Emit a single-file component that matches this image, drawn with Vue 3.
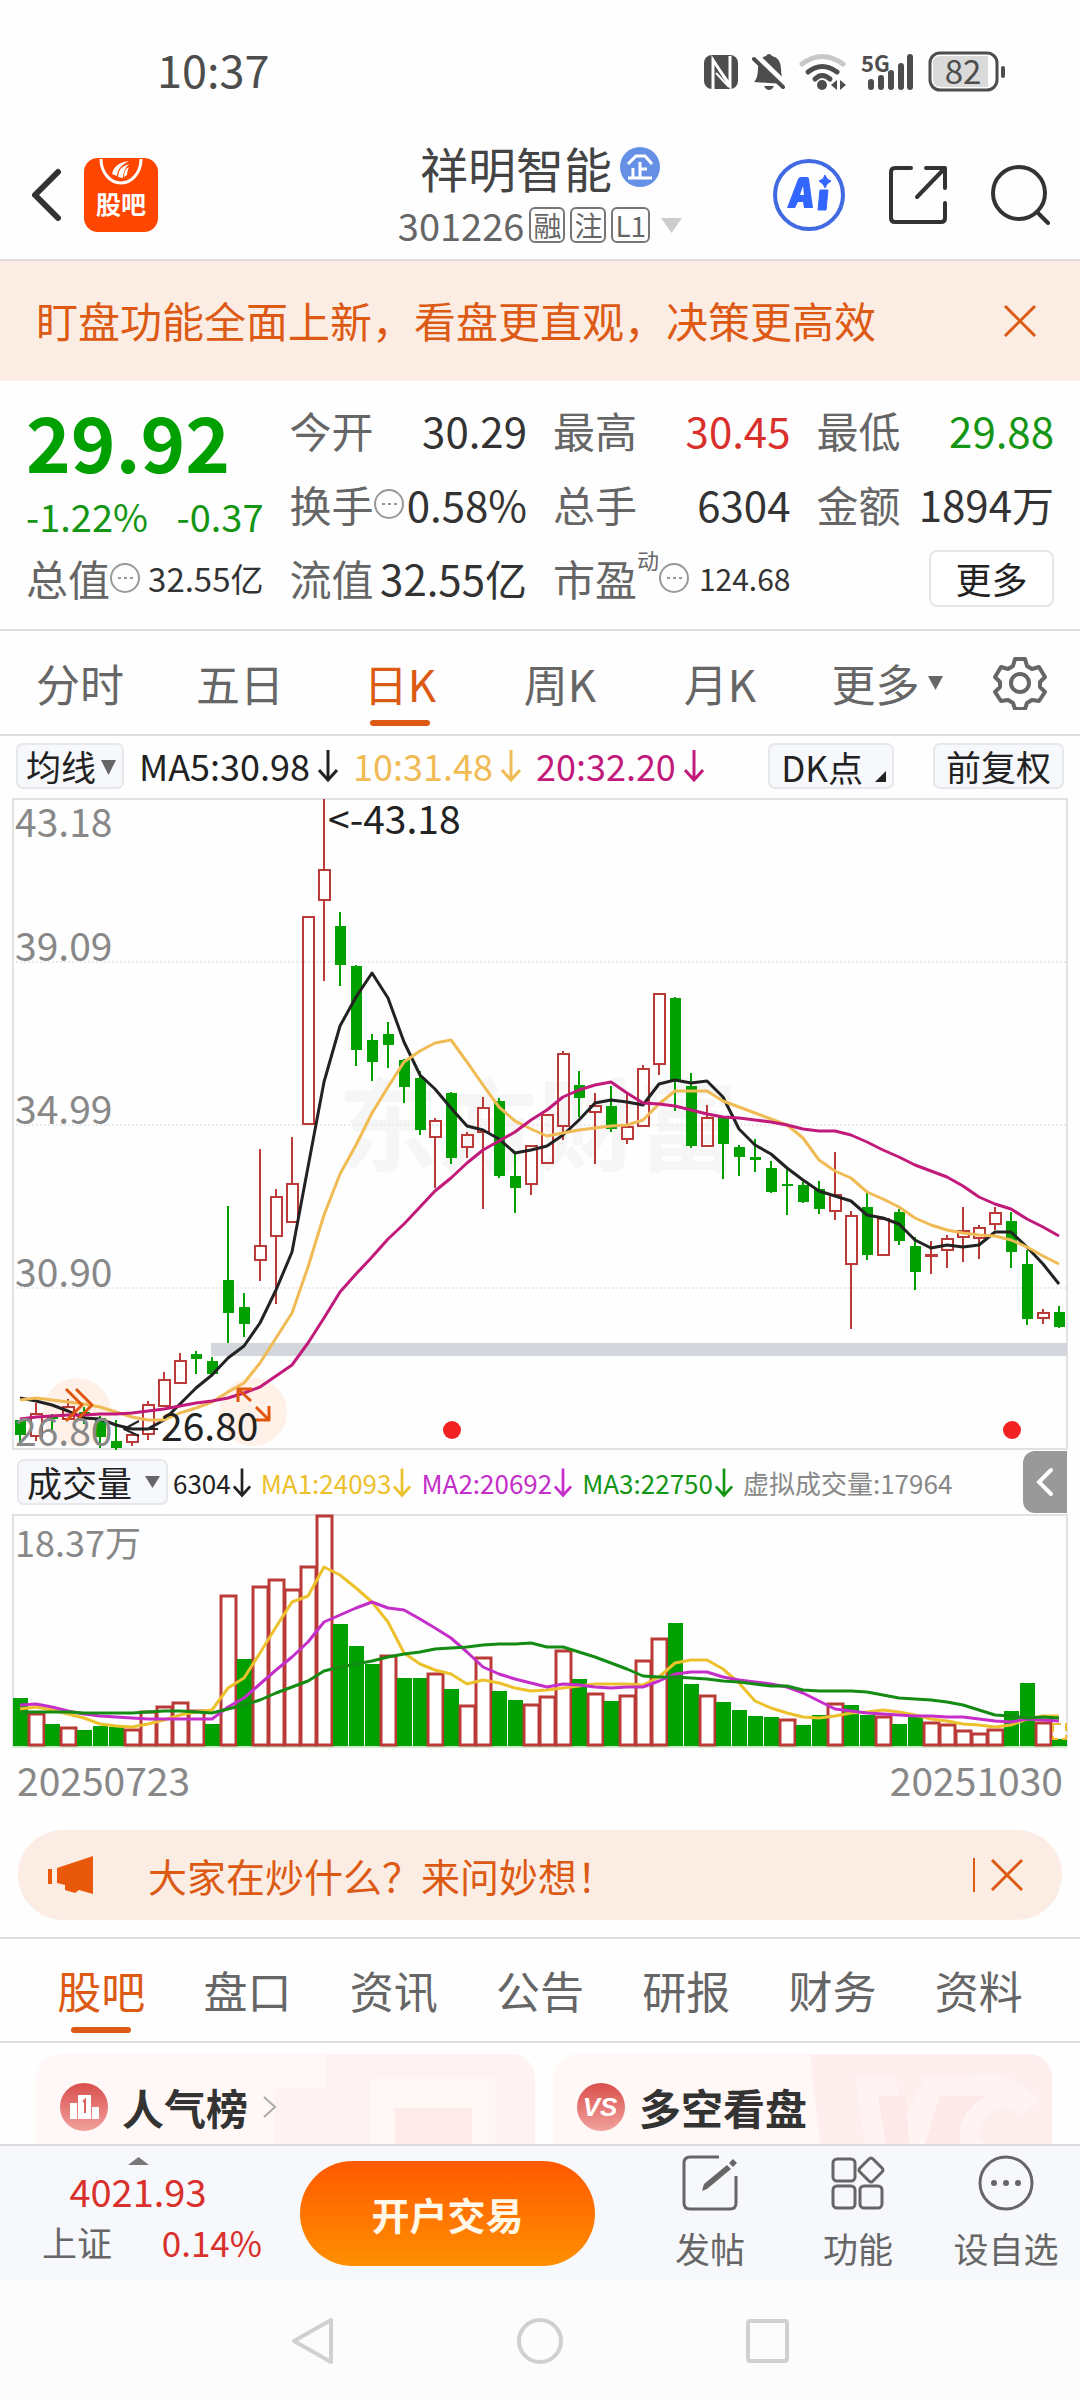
<script setup>
import { ref } from 'vue'

const periods = ['分时', '五日', '日K', '周K', '月K']
const activePeriod = ref('日K')
const sections = ['股吧', '盘口', '资讯', '公告', '研报', '财务', '资料']
const activeSection = ref('股吧')

const cx = (i) => Math.round(20 + i * 15.98)

// [up?, high, body top, body bottom, low]
const candles = [
  [0, 1420, 1420, 1435, 1445], [1, 1403, 1413, 1437, 1441], [0, 1414, 1415, 1419, 1430],
  [1, 1399, 1406, 1420, 1420], [0, 1407, 1412, 1415, 1424], [0, 1416, 1418, 1437, 1448],
  [0, 1420, 1441, 1448, 1450], [1, 1433, 1434, 1443, 1446], [1, 1401, 1404, 1435, 1440],
  [1, 1372, 1379, 1407, 1407], [1, 1353, 1360, 1384, 1384], [0, 1351, 1354, 1359, 1374],
  [0, 1357, 1361, 1374, 1374], [0, 1206, 1280, 1313, 1343], [0, 1293, 1307, 1324, 1337],
  [1, 1149, 1245, 1261, 1281], [1, 1189, 1196, 1237, 1304], [1, 1137, 1183, 1223, 1223],
  [1, 916, 916, 1125, 1125], [1, 799, 869, 901, 981], [0, 912, 926, 965, 986],
  [0, 965, 966, 1050, 1066], [0, 1034, 1040, 1062, 1081], [0, 1022, 1034, 1045, 1068],
  [0, 1059, 1060, 1087, 1103], [0, 1071, 1078, 1130, 1135], [1, 1118, 1120, 1138, 1188],
  [0, 1092, 1093, 1158, 1164], [1, 1132, 1134, 1148, 1158], [1, 1097, 1107, 1133, 1209],
  [0, 1098, 1101, 1176, 1178], [0, 1152, 1176, 1188, 1213], [1, 1145, 1145, 1185, 1195],
  [1, 1114, 1114, 1164, 1164], [1, 1051, 1053, 1127, 1140], [0, 1071, 1085, 1098, 1117],
  [1, 1093, 1105, 1113, 1164], [0, 1086, 1106, 1129, 1132], [1, 1094, 1126, 1140, 1144],
  [1, 1065, 1068, 1127, 1127], [1, 993, 993, 1065, 1075], [0, 997, 998, 1080, 1111],
  [0, 1073, 1086, 1146, 1148], [1, 1105, 1117, 1147, 1147], [0, 1117, 1117, 1144, 1179],
  [0, 1145, 1147, 1157, 1176], [0, 1139, 1157, 1160, 1172], [0, 1161, 1168, 1192, 1193],
  [0, 1168, 1184, 1186, 1215], [0, 1182, 1185, 1202, 1203], [0, 1181, 1189, 1209, 1214],
  [1, 1152, 1194, 1212, 1220], [1, 1211, 1215, 1265, 1329], [0, 1193, 1207, 1255, 1260],
  [1, 1218, 1218, 1256, 1256], [0, 1209, 1212, 1241, 1245], [0, 1237, 1246, 1272, 1290],
  [1, 1241, 1254, 1257, 1274], [1, 1235, 1238, 1251, 1268], [1, 1207, 1230, 1238, 1262],
  [1, 1225, 1227, 1239, 1259], [1, 1207, 1212, 1225, 1230], [0, 1212, 1221, 1252, 1268],
  [0, 1250, 1264, 1319, 1325], [1, 1309, 1312, 1319, 1324], [0, 1306, 1312, 1327, 1328]
]

const volumeTops = [
  1698, 1713, 1724, 1727, 1730, 1726, 1727, 1729, 1711, 1706, 1702, 1710, 1724, 1595, 1659, 1586,
  1579, 1589, 1566, 1515, 1624, 1646, 1664, 1655, 1678, 1678, 1673, 1689, 1705, 1657, 1691, 1700,
  1704, 1696, 1650, 1679, 1693, 1701, 1695, 1660, 1638, 1623, 1684, 1695, 1702, 1710, 1716, 1717,
  1719, 1725, 1715, 1703, 1705, 1715, 1716, 1724, 1717, 1722, 1724, 1730, 1733, 1729, 1711, 1683,
  1722, 1739
]
// days that closed above the previous close although the candle itself is green
const closedUp = [11, 13, 23, 48]
const closedDown = [52]
const volumeUp = (i) => (candles[i][0] && !closedDown.includes(i)) || closedUp.includes(i)

const ma5 = [1398, 1401, 1405, 1411, 1418, 1419, 1425, 1429, 1429, 1420, 1404, 1388, 1375, 1358, 1346, 1323, 1290, 1252, 1167, 1082, 1026, 997, 973, 998, 1042, 1075, 1089, 1108, 1126, 1130, 1139, 1153, 1150, 1146, 1135, 1120, 1103, 1100, 1102, 1105, 1084, 1080, 1083, 1081, 1097, 1129, 1145, 1154, 1168, 1180, 1191, 1196, 1201, 1215, 1218, 1224, 1240, 1248, 1245, 1247, 1245, 1232, 1232, 1247, 1264, 1284]
const ma10 = [1400, 1398, 1400, 1402, 1404, 1407, 1412, 1417, 1420, 1420, 1413, 1408, 1402, 1392, 1383, 1363, 1338, 1313, 1267, 1215, 1174, 1145, 1113, 1087, 1062, 1051, 1043, 1040, 1062, 1085, 1107, 1121, 1129, 1136, 1133, 1130, 1128, 1126, 1125, 1120, 1104, 1091, 1091, 1091, 1101, 1107, 1113, 1119, 1125, 1138, 1160, 1171, 1178, 1192, 1199, 1207, 1218, 1225, 1230, 1233, 1235, 1236, 1240, 1247, 1256, 1264]
const ma20 = [1419, 1417, 1416, 1415, 1415, 1414, 1414, 1413, 1411, 1409, 1406, 1403, 1401, 1398, 1393, 1387, 1376, 1365, 1343, 1318, 1292, 1274, 1257, 1239, 1224, 1207, 1191, 1178, 1163, 1150, 1141, 1132, 1120, 1110, 1097, 1090, 1085, 1082, 1093, 1103, 1104, 1106, 1110, 1114, 1117, 1118, 1120, 1122, 1125, 1129, 1131, 1131, 1135, 1142, 1150, 1157, 1165, 1171, 1177, 1186, 1197, 1204, 1209, 1219, 1227, 1236]
const vol1 = [1709, 1707, 1710, 1714, 1718, 1724, 1726, 1727, 1724, 1720, 1715, 1712, 1710, 1688, 1678, 1653, 1627, 1602, 1596, 1567, 1575, 1588, 1602, 1622, 1653, 1664, 1670, 1674, 1684, 1680, 1683, 1688, 1691, 1690, 1688, 1686, 1684, 1684, 1684, 1685, 1677, 1663, 1660, 1660, 1669, 1683, 1701, 1708, 1713, 1717, 1718, 1716, 1713, 1712, 1710, 1712, 1715, 1719, 1721, 1724, 1725, 1727, 1725, 1719, 1716, 1716]
const vol2 = [1705, 1704, 1707, 1711, 1714, 1716, 1717, 1718, 1719, 1719, 1719, 1719, 1719, 1707, 1698, 1684, 1670, 1657, 1642, 1622, 1615, 1608, 1602, 1608, 1610, 1619, 1628, 1638, 1652, 1667, 1674, 1679, 1683, 1687, 1684, 1685, 1687, 1688, 1687, 1687, 1681, 1674, 1672, 1672, 1677, 1680, 1682, 1684, 1687, 1693, 1701, 1709, 1711, 1713, 1714, 1715, 1716, 1716, 1717, 1717, 1719, 1721, 1722, 1719, 1720, 1721]
const vol3 = [1712, 1712, 1712, 1712, 1713, 1713, 1713, 1713, 1712, 1711, 1711, 1712, 1713, 1709, 1705, 1700, 1693, 1687, 1681, 1671, 1667, 1664, 1661, 1657, 1654, 1652, 1649, 1648, 1647, 1645, 1644, 1644, 1643, 1647, 1647, 1652, 1657, 1663, 1669, 1676, 1677, 1677, 1678, 1679, 1681, 1682, 1684, 1686, 1686, 1690, 1691, 1691, 1691, 1692, 1695, 1698, 1699, 1700, 1702, 1705, 1710, 1715, 1716, 1718, 1717, 1718]

const line = (values) => values.map((y, i) => `${cx(i)},${y}`).join(' ')
const gridLabels = [
  { y: 837, text: '43.18' },
  { y: 961, text: '39.09' },
  { y: 1124, text: '34.99' },
  { y: 1287, text: '30.90' },
  { y: 1446, text: '26.80' }
]
</script>

<template>
  <div class="page">
    <div class="status">
      <time>10:37</time>
      <svg class="status-icons" viewBox="704 42 303 62" role="img" aria-label="系统状态">
        <rect x="704" y="56" width="34" height="34" rx="8" fill="#4d4d4d" />
        <path d="M713 90V61l17 26V57" fill="none" stroke="#fff" stroke-width="3" />
        <path d="M716 66l14 19M716 74l13 14" stroke="#fff" stroke-width="2" />
        <path d="M754 83q4-4 4-14q0-10 8-12q1-2 3-2t3 2q9 2 9 13q0 9 4 15z" fill="#4d4d4d" />
        <path d="M755 57L787 88" stroke="#fff" stroke-width="8" />
        <path d="M754 60L783 88" stroke="#4d4d4d" stroke-width="4" stroke-linecap="round" />
        <path d="M764 87h10q-2 4-5 4t-5-4z" fill="#4d4d4d" />
        <g fill="none" stroke="#4d4d4d" stroke-width="5" stroke-linecap="round">
          <path d="M802 65q20-15 41 0" stroke="#c8c8c8" />
          <path d="M808 73q14-11 29 0" />
          <path d="M815 80q7-7 15 0" />
        </g>
        <circle cx="822" cy="86" r="5" fill="#4d4d4d" />
        <path d="M831 86l6-5v10zM838 81v10M846 86l-6-5v10z" fill="#4d4d4d" />
        <text x="861" y="73" class="net">5G</text>
        <g stroke="#4d4d4d" stroke-width="6" stroke-linecap="round">
          <path d="M871 83v5M881 79v9M891 74v14M901 67v21M910 58v30" />
        </g>
        <rect x="930" y="54" width="67" height="37" rx="10" fill="#fff" stroke="#4d4d4d" stroke-width="3" />
        <path d="M940 57h48v31h-48q-7 0-7-7v-17q0-7 7-7z" fill="#dadada" />
        <text x="963" y="85" text-anchor="middle" class="battery">82</text>
        <path d="M1003 69v8" stroke="#4d4d4d" stroke-width="4" stroke-linecap="round" />
      </svg>
    </div>

    <header class="header">
      <div class="header-left">
        <button class="plain" aria-label="返回">
          <svg width="34" height="56" viewBox="0 0 34 56"><path d="M29 5L6 28l23 23" fill="none" stroke="#333" stroke-width="6" stroke-linecap="round" stroke-linejoin="round" /></svg>
        </button>
        <a class="logo" href="#" aria-label="股吧">
          <svg width="74" height="74" viewBox="0 0 74 74">
            <rect width="74" height="74" rx="14" fill="#ff4600" />
            <path d="M17 1a20 24 0 0 0 40 0" fill="none" stroke="#fff" stroke-width="3" />
            <path d="M28 16q2-11 17-13q-12 6-12 15zM34 19q0-10 11-13q-6 6-6 14zM40 19q0-8 5-10q-2 4-2 8z" fill="#fff" />
            <text x="37" y="56" text-anchor="middle">股吧</text>
          </svg>
        </a>
      </div>
      <div class="title">
        <h1>祥明智能<svg width="40" height="40" viewBox="0 0 40 40"><circle cx="20" cy="20" r="20" fill="#6690e6" /><path d="M8 17L16 9h9l7 8M20 15v16M20 22h7M13 21v10M8 31h24" fill="none" stroke="#fff" stroke-width="3" /></svg></h1>
        <div class="sub">
          <span>301226</span><i>融</i><i>注</i><i>L1</i>
          <svg width="21" height="15" viewBox="0 0 21 15"><path d="M0 0h21L10.500 15z" fill="#ccc" /></svg>
        </div>
      </div>
      <div class="header-right">
        <button class="plain" aria-label="AI">
          <svg width="72" height="72" viewBox="0 0 72 72">
            <circle cx="36" cy="36" r="34" fill="none" stroke="#4169e1" stroke-width="4" />
            <path d="M14 49L25 20q1-2 3-2h6q2 0 2 2l4 29h-9l-1-6h-5l-3 6zM27 36h4l-1-9z" fill="#3366ff" />
            <path d="M47 31h8l-2 20h-8zM52 16l2 4 4 2-4 3-2 4-2-4-4-3 4-2z" fill="#3366ff" stroke="#3366ff" stroke-width="1" />
          </svg>
        </button>
        <button class="plain" aria-label="分享">
          <svg width="58" height="58" viewBox="0 0 58 58"><path d="M22 2H6q-4 0-4 4v46q0 4 4 4h46q4 0 4-4V37M37 2h19v20M55 3L28 31" fill="none" stroke="#333" stroke-width="4" stroke-linecap="round" stroke-linejoin="round" /></svg>
        </button>
        <button class="plain" aria-label="搜索">
          <svg width="60" height="60" viewBox="0 0 60 60"><circle cx="28" cy="28" r="26" fill="none" stroke="#333" stroke-width="4" /><path d="M46 47l11 11" stroke="#333" stroke-width="4" stroke-linecap="round" /></svg>
        </button>
      </div>
    </header>

    <div class="notice">
      <span>盯盘功能全面上新，看盘更直观，决策更高效</span>
      <button class="plain" aria-label="关闭">
        <svg width="34" height="34" viewBox="0 0 34 34"><path d="M2 2l30 30M32 2L2 32" stroke="#dc5a14" stroke-width="3" /></svg>
      </button>
    </div>

    <section class="quote">
      <div class="price">
        <strong>29.92</strong>
        <div class="change"><span>-1.22%</span><span>-0.37</span></div>
      </div>
      <div class="cell"><span>今开</span><b>30.29</b></div>
      <div class="cell"><span>最高</span><b class="red">30.45</b></div>
      <div class="cell"><span>最低</span><b class="green">29.88</b></div>
      <div class="cell"><span>换手</span><svg class="dots" viewBox="0 0 30 30"><circle cx="15" cy="15" r="14" /><path d="M8 15h3M14 15h3M20 15h3" /></svg><b>0.58%</b></div>
      <div class="cell"><span>总手</span><b>6304</b></div>
      <div class="cell"><span>金额</span><b>1894万</b></div>
      <div class="cell"><span>总值</span><svg class="dots" viewBox="0 0 30 30"><circle cx="15" cy="15" r="14" /><path d="M8 15h3M14 15h3M20 15h3" /></svg><b class="small">32.55亿</b></div>
      <div class="cell"><span>流值</span><b>32.55亿</b></div>
      <div class="cell"><span>市盈</span><small>动</small><svg class="dots" viewBox="0 0 30 30"><circle cx="15" cy="15" r="14" /><path d="M8 15h3M14 15h3M20 15h3" /></svg><b class="tiny">124.68</b></div>
      <div class="cell end"><button class="more">更多</button></div>
    </section>

    <nav class="periods">
      <button v-for="p in periods" :key="p" class="tab" :class="{ active: p === activePeriod }" @click="activePeriod = p">{{ p }}</button>
      <button class="tab tab-more">更多<svg width="15" height="14" viewBox="0 0 15 14"><path d="M0 0h15L7.500 14z" fill="#666" /></svg></button>
      <button class="plain gear" aria-label="设置">
        <svg width="54" height="54" viewBox="0 0 54 54" fill="none" stroke="#666" stroke-width="4" stroke-linejoin="round">
          <path d="M22 3h10l2 7 5 3 7-2 6 10-5 5v5l5 5-6 9-7-1-5 3-2 6H22l-2-6-5-3-7 1-6-9 5-5v-5l-5-5 6-10 7 2 5-3z" />
          <circle cx="27" cy="27" r="9" />
        </svg>
      </button>
    </nav>

    <div class="ma-row">
      <label class="picker"><select aria-label="主图指标"><option>均线</option></select><svg width="15" height="15" viewBox="0 0 15 15"><path d="M0 0h15L7.500 15z" fill="#666" /></svg></label>
      <span class="c-dark">MA5:30.98<svg class="arrow" viewBox="0 0 20 34"><path d="M10 2v29M1 22l9 10 9-10" /></svg></span>
      <span class="c-gold">10:31.48<svg class="arrow" viewBox="0 0 20 34"><path d="M10 2v29M1 22l9 10 9-10" /></svg></span>
      <span class="c-mag">20:32.20<svg class="arrow" viewBox="0 0 20 34"><path d="M10 2v29M1 22l9 10 9-10" /></svg></span>
      <button class="chip dk">DK点<svg width="11" height="11" viewBox="0 0 11 11"><path d="M11 0v11H0z" fill="#222" /></svg></button>
      <button class="chip">前复权</button>
    </div>

    <svg class="chart" viewBox="0 798 1080 652" role="img" aria-label="日K线图">
      <text x="338" y="1163" class="watermark">东方财富</text>
      <g fill="none" stroke="#e2e2e2" stroke-width="2">
        <rect x="13" y="799" width="1054" height="650" />
        <path d="M12 962H1067M12 1125H1067M12 1288H1067" stroke-dasharray="2 2" stroke-width="2" stroke="#ebebeb" />
      </g>
      <rect x="211" y="1343" width="856" height="13" fill="#d3d6db" />
      <circle cx="77" cy="1412" r="34" fill="#fff0e8" />
      <circle cx="253" cy="1412" r="34" fill="#fff0e8" />
      <g v-for="(c, i) in candles" :key="i">
        <template v-if="c[0]">
          <path :d="`M${cx(i)} ${c[1]}V${c[2]}M${cx(i)} ${c[3]}V${c[4]}`" stroke="#b93a36" stroke-width="2" />
          <rect :x="cx(i) - 5" :y="c[2] + 1" width="11" :height="Math.max(1, c[3] - c[2] - 2)" fill="none" stroke="#b93a36" stroke-width="2" />
        </template>
        <template v-else>
          <path :d="`M${cx(i)} ${c[1]}V${c[4]}`" stroke="#00a000" stroke-width="2" />
          <rect :x="cx(i) - 5" :y="c[2]" width="11" :height="c[3] - c[2]" fill="#00a000" />
        </template>
      </g>
      <g fill="none" stroke-width="3" stroke-linejoin="round">
        <polyline :points="line(ma5)" stroke="#222" />
        <polyline :points="line(ma10)" stroke="#f0bb55" />
        <polyline :points="line(ma20)" stroke="#c11a7b" />
        <path d="M66 1389l16 16-16 16M76 1389l16 16-16 16" stroke="#e0560c" />
        <path d="M251 1401l-13-12v13m0-13h14M256 1407l13 13v-14m0 14h-15" stroke="#e0560c" />
        <path d="M139 1421l-15 8 15 7M124 1429h34" stroke="#222" stroke-width="2" />
      </g>
      <text v-for="g in gridLabels" :key="g.text" x="15" :y="g.y" class="axis">{{ g.text }}</text>
      <text x="328" y="834" class="mark">&lt;-43.18</text>
      <text x="161" y="1441" class="mark">26.80</text>
      <circle cx="452" cy="1430" r="9" fill="#f22222" />
      <circle cx="1012" cy="1430" r="9" fill="#f22222" />
    </svg>

    <div class="vol-row">
      <label class="picker vol"><select aria-label="副图指标"><option>成交量</option></select><svg width="15" height="12" viewBox="0 0 15 12"><path d="M0 0h15L7.500 12z" fill="#666" /></svg></label>
      <span class="c-dark">6304<svg class="arrow" viewBox="0 0 20 34"><path d="M10 2v29M1 22l9 10 9-10" /></svg></span>
      <span class="c-yellow">MA1:24093<svg class="arrow" viewBox="0 0 20 34"><path d="M10 2v29M1 22l9 10 9-10" /></svg></span>
      <span class="c-violet">MA2:20692<svg class="arrow" viewBox="0 0 20 34"><path d="M10 2v29M1 22l9 10 9-10" /></svg></span>
      <span class="c-green">MA3:22750<svg class="arrow" viewBox="0 0 20 34"><path d="M10 2v29M1 22l9 10 9-10" /></svg></span>
      <span class="c-gray">虚拟成交量:17964</span>
      <button class="collapse" aria-label="展开">
        <svg width="18" height="30" viewBox="0 0 18 30"><path d="M15 3L3 15l12 12" fill="none" stroke="#fff" stroke-width="4" stroke-linecap="round" /></svg>
      </button>
    </div>

    <svg class="chart" viewBox="0 1514 1080 234" role="img" aria-label="成交量图">
      <path d="M13 1747V1515H1067V1747" fill="none" stroke="#e2e2e2" stroke-width="2" />
      <path d="M12 1747H1067" stroke="#cdeccd" stroke-width="2" />
      <g v-for="(top, i) in volumeTops" :key="i">
        <rect v-if="volumeUp(i)" :x="cx(i) - 7" :y="top + 1" width="15" :height="1744 - top" fill="#fff" stroke="#b93a36" stroke-width="3" />
        <rect v-else :x="cx(i) - 7" :y="top" width="15" :height="1746 - top" fill="#00a000" />
      </g>
      <rect x="1053" y="1724" width="13" height="15" fill="#fff" stroke="#f0bb30" stroke-width="2" stroke-dasharray="8 4" />
      <g fill="none" stroke-width="3" stroke-linejoin="round">
        <polyline :points="line(vol1)" stroke="#ecc12c" />
        <polyline :points="line(vol2)" stroke="#c52fc9" />
        <polyline :points="line(vol3)" stroke="#148c14" />
      </g>
      <text x="15" y="1557" class="axis vol-axis">18.37万</text>
    </svg>
    <div class="dates"><time>20250723</time><time>20251030</time></div>

    <div class="ask">
      <svg width="46" height="40" viewBox="0 0 46 40"><path d="M0 14h4v15H0zM9 13L45 1v38l-14-4-4 3-10-3v-5l-8-2z" fill="#e8590c" /></svg>
      <a href="#">大家在炒什么？来问妙想！</a>
      <button class="plain" aria-label="关闭">
        <svg width="34" height="34" viewBox="0 0 34 34"><path d="M2 2l30 30M32 2L2 32" stroke="#dc5a14" stroke-width="3" /></svg>
      </button>
    </div>

    <nav class="sections">
      <button v-for="s in sections" :key="s" class="tab" :class="{ active: s === activeSection }" @click="activeSection = s">{{ s }}</button>
    </nav>

    <section class="cards">
      <a class="card" href="#">
        <svg class="deco" width="260" height="90" viewBox="0 0 260 90"><path d="M50 0h210v90H0V35h50z" fill="#fef3f2" /><path d="M95 24h125v66h-23V54h-77v36h-25z" fill="#fef7f5" /><path d="M120 54h77v36h-77z" fill="#fdebea" /></svg>
        <svg width="48" height="48" viewBox="0 0 48 48"><circle cx="24" cy="24" r="24" fill="url(#red-fade)" /><path d="M10 20h7v16h-7zM18 12h13v24H18zM32 24h7v12h-7z" fill="#fff" /><path d="M23 19l2-2v13" stroke="#dd615f" stroke-width="2" fill="none" /></svg>
        <h2>人气榜</h2>
        <svg width="16" height="24" viewBox="0 0 16 24"><path d="M2 2l11 10L2 22" fill="none" stroke="#aaa" stroke-width="2" /></svg>
      </a>
      <a class="card" href="#">
        <svg class="deco" width="242" height="90" viewBox="0 0 242 90"><path d="M0 0h242v90H10z" fill="#feeeed" /><path d="M45 23h40l10 40 20-40h40q50-10 75 25l-20 14q-15-15-30-2-20 20-5 30H55z" fill="#fff4f3" /><path d="M68 42h28l3 48H76zM130 42h45q-30 20-25 48h-35z" fill="#fde9e8" /></svg>
        <svg width="48" height="48" viewBox="0 0 48 48">
          <defs><linearGradient id="red-fade" x1="0" y1="0" x2="0" y2="1"><stop offset="0" stop-color="#d94f4c" /><stop offset="1" stop-color="#f2a19d" /></linearGradient></defs>
          <circle cx="24" cy="24" r="24" fill="url(#red-fade)" /><text x="23" y="33" text-anchor="middle" class="vs">VS</text>
        </svg>
        <h2>多空看盘</h2>
      </a>
    </section>

    <footer class="bar">
      <div class="index">
        <svg width="21" height="8" viewBox="0 0 21 8"><path d="M0 8h21L10.500 0z" fill="#777" /></svg>
        <b>4021.93</b>
        <div><span>上证</span><em>0.14%</em></div>
      </div>
      <button class="open">开户交易</button>
      <div class="actions">
        <button class="plain action">
          <svg width="56" height="56" viewBox="0 0 56 56" fill="none" stroke="#666" stroke-width="3"><path d="M37 2H8q-6 0-6 6v40q0 6 6 6h40q6 0 6-6V21" /><path d="M20 36l2-7L45 10l4 4-24 20z" fill="#666" stroke="none" /><path d="M47 8l4-4 4 4-4 4z" fill="#666" stroke="none" /></svg>
          发帖
        </button>
        <button class="plain action">
          <svg width="56" height="56" viewBox="0 0 56 56" fill="none" stroke="#666" stroke-width="3"><rect x="3" y="4" width="22" height="22" rx="4" /><rect x="3" y="31" width="22" height="22" rx="4" /><rect x="30" y="31" width="22" height="22" rx="4" /><path d="M39 4q2-2 4 0l9 9q2 2 0 4l-9 9q-2 2-4 0l-9-9q-2-2 0-4z" /></svg>
          功能
        </button>
        <button class="plain action">
          <svg width="56" height="56" viewBox="0 0 56 56"><circle cx="28" cy="28" r="26" fill="none" stroke="#666" stroke-width="3" /><circle cx="16" cy="28" r="3" fill="#666" /><circle cx="28" cy="28" r="3" fill="#666" /><circle cx="40" cy="28" r="3" fill="#666" /></svg>
          设自选
        </button>
      </div>
    </footer>

    <div class="sysnav">
      <button class="plain" aria-label="系统返回"><svg width="48" height="48" viewBox="0 0 48 48"><path d="M42 3v42L5 24z" fill="none" stroke="#d0d0d0" stroke-width="4" stroke-linejoin="round" /></svg></button>
      <button class="plain" aria-label="主屏幕"><svg width="48" height="48" viewBox="0 0 48 48"><circle cx="24" cy="24" r="21" fill="none" stroke="#d0d0d0" stroke-width="4" /></svg></button>
      <button class="plain" aria-label="最近任务"><svg width="48" height="48" viewBox="0 0 48 48"><rect x="5" y="4" width="39" height="40" rx="2" fill="none" stroke="#d0d0d0" stroke-width="4" /></svg></button>
    </div>
  </div>
</template>

<style>
body {
  margin: 0;
  background: #fefefe;
}
</style>

<style scoped>
.page,
.page button,
.page select {
  font-family: "Noto Sans CJK SC", "Noto Sans", sans-serif;
}
.page {
  color: #222;
  background: #fefefe;
}
.page * {
  box-sizing: border-box;
}
svg {
  display: block;
  flex: none;
}
button {
  margin: 0;
  cursor: pointer;
  white-space: nowrap;
}
.plain {
  padding: 0;
  border: 0;
  background: none;
}
a {
  color: inherit;
  text-decoration: none;
}
.status {
  display: flex;
  justify-content: space-between;
  align-items: center;
  height: 131px;
  padding: 12px 73px 0 157px;
  font-size: 45px;
  line-height: 60px;
  color: #4d4d4d;
}
.status time {
  padding-bottom: 6px;
}
.status-icons {
  width: 303px;
  height: 62px;
}
.net {
  font: bold 22px "Noto Sans CJK SC", sans-serif;
  fill: #4d4d4d;
}
.battery {
  font: 33px "Noto Sans CJK SC", sans-serif;
  fill: #4d4d4d;
}
.header {
  display: grid;
  grid-template-columns: 1fr auto 1fr;
  align-items: center;
  height: 130px;
  padding: 0 29px;
  border-bottom: 2px solid #ddd;
}
.header-left,
.header-right {
  display: flex;
  align-items: center;
}
.header-left {
  gap: 21px;
}
.header-right {
  justify-content: flex-end;
  gap: 44px;
}
.logo text {
  font: bold 25px "Noto Sans CJK SC", sans-serif;
  fill: #fff;
}
.title {
  display: flex;
  flex-direction: column;
  align-items: center;
  padding-bottom: 2px;
  color: #444;
}
h1 {
  display: flex;
  align-items: center;
  gap: 8px;
  margin: 0;
  font-size: 48px;
  font-weight: 400;
  line-height: 62px;
}
.sub {
  display: flex;
  align-items: center;
  gap: 5px;
  font-size: 38px;
  line-height: 54px;
  color: #666;
}
.sub i {
  padding: 0 2px;
  border: 2px solid #777;
  border-radius: 6px;
  font-size: 28px;
  font-style: normal;
  line-height: 32px;
}
.sub svg {
  margin-left: 6px;
}
.notice {
  display: flex;
  justify-content: space-between;
  align-items: center;
  height: 120px;
  padding: 0 43px 0 36px;
  background: #fcede4;
  color: #dc5a14;
  font-size: 42px;
}
.notice span {
  padding-bottom: 4px;
}
.quote {
  display: grid;
  grid-template-columns: repeat(4, minmax(0, 1fr));
  grid-template-rows: repeat(3, 74px);
  column-gap: 26px;
  padding: 12px 26px 14px;
  border-bottom: 2px solid #ddd;
}
.price {
  grid-row: 1 / span 2;
  color: #00a000;
}
.price strong {
  display: block;
  font-size: 76px;
  line-height: 94px;
}
.change {
  display: flex;
  justify-content: space-between;
  font-size: 38px;
  line-height: 58px;
  color: #149614;
}
.cell {
  display: flex;
  align-items: center;
  font-size: 42px;
  line-height: 74px;
  white-space: nowrap;
  color: #666;
}
.cell b {
  margin-left: auto;
  font-weight: 400;
  color: #333;
}
.cell b.red {
  color: #d9302c;
}
.cell b.green {
  color: #149614;
}
.cell b.small {
  font-size: 33px;
}
.cell b.tiny {
  font-size: 30px;
}
.cell small {
  align-self: flex-start;
  font-size: 22px;
  line-height: 36px;
}
.dots {
  width: 30px;
  height: 30px;
  fill: none;
  stroke: #999;
  stroke-width: 2;
}
.end {
  justify-content: flex-end;
}
.more {
  width: 125px;
  height: 57px;
  border: 2px solid #e6e6e6;
  border-radius: 8px;
  background: #fff;
  color: #222;
  font-size: 36px;
  line-height: 50px;
}
.periods {
  display: flex;
  height: 105px;
  border-bottom: 2px solid #ddd;
}
.tab {
  position: relative;
  display: flex;
  flex: 1 1 160px;
  align-items: center;
  justify-content: center;
  gap: 8px;
  padding: 0;
  border: 0;
  background: none;
  color: #666;
  font-size: 44px;
  line-height: 60px;
}
.tab-more {
  padding-left: 14px;
}
.tab.active {
  color: #dc5a14;
}
.tab.active::after {
  content: "";
  position: absolute;
  bottom: 8px;
  left: calc(50% - 30px);
  width: 60px;
  height: 6px;
  border-radius: 3px;
  background: #dc5a14;
}
.gear {
  display: flex;
  flex: 0 1 120px;
  align-items: center;
  justify-content: center;
}
.ma-row {
  display: flex;
  align-items: center;
  gap: 15px;
  height: 62px;
  padding: 0 16px 2px;
  font-size: 36px;
  line-height: 48px;
  white-space: nowrap;
}
.ma-row span,
.vol-row span {
  display: flex;
  align-items: center;
}
.ma-row span {
  padding-bottom: 2px;
}
.arrow {
  width: 20px;
  height: 34px;
  margin-left: 8px;
  fill: none;
  stroke: currentColor;
  stroke-width: 3;
}
.picker {
  position: relative;
  display: flex;
}
.picker select {
  width: 108px;
  height: 46px;
  padding: 0 0 0 8px;
  border: 2px solid #e6e8eb;
  border-radius: 7px;
  appearance: none;
  background: #f6f8fb;
  color: #222;
  font-size: 35px;
  line-height: 40px;
}
.picker.vol select {
  width: 151px;
}
.picker svg {
  position: absolute;
  top: 17px;
  right: 8px;
  pointer-events: none;
}
.chip {
  height: 46px;
  padding: 0 11px;
  border: 2px solid #e6e8eb;
  border-radius: 7px;
  background: #f6f8fb;
  color: #222;
  font-size: 35px;
  line-height: 40px;
}
.chip + .chip {
  margin-left: 24px;
}
.dk {
  display: flex;
  align-items: flex-end;
  gap: 12px;
  margin-left: auto;
  padding-right: 6px;
}
.dk svg {
  margin-bottom: 5px;
}
.c-dark {
  color: #222;
}
.c-gold {
  color: #f0bb55;
}
.c-mag {
  color: #c11a7b;
}
.c-yellow {
  color: #ecc12c;
}
.c-violet {
  color: #c52fc9;
}
.c-green {
  color: #149614;
}
.c-gray {
  color: #888;
}
.chart {
  width: 100%;
  height: auto;
  overflow: visible;
}
.chart text {
  font-family: "Noto Sans CJK SC", "Noto Sans", sans-serif;
}
.chart .watermark {
  font-size: 100px;
  font-weight: 700;
  fill: #f6f6f6;
}
.chart .axis {
  font-size: 39px;
  fill: #888;
}
.chart .vol-axis {
  font-size: 36px;
}
.chart .mark {
  font-size: 39px;
  fill: #222;
}
.vol-row {
  display: flex;
  align-items: center;
  gap: 10px;
  height: 64px;
  padding: 0 13px 0 17px;
  font-size: 26px;
  white-space: nowrap;
}
.vol-row .arrow {
  width: 18px;
  margin-left: 2px;
}
.vol-row .picker {
  margin-right: -5px;
}
.collapse {
  display: flex;
  align-items: center;
  justify-content: center;
  width: 44px;
  height: 62px;
  margin-left: auto;
  padding: 0;
  border: 0;
  border-radius: 12px 0 0 12px;
  background: #999;
}
.dates {
  display: flex;
  justify-content: space-between;
  height: 82px;
  padding: 0 17px;
  color: #888;
  font-size: 39px;
  line-height: 62px;
}
.ask {
  display: flex;
  align-items: center;
  height: 90px;
  margin: 0 18px 17px;
  padding: 0 38px 0 30px;
  border-radius: 45px;
  background: #fcede4;
  color: #dc5a14;
}
.ask a {
  flex: 1;
  margin-left: 54px;
  font-size: 39px;
}
.ask button {
  padding-left: 15px;
  border-left: 2px solid #dc5a14;
}
.sections {
  display: flex;
  height: 106px;
  padding: 0 28px;
  border-top: 2px solid #ddd;
  border-bottom: 2px solid #ddd;
}
.sections .tab {
  flex: 1 1 0;
}
.cards {
  display: grid;
  grid-template-columns: 1fr 1fr;
  gap: 18px;
  padding: 11px 28px 0 36px;
}
.card {
  position: relative;
  display: flex;
  align-items: center;
  gap: 14px;
  height: 90px;
  padding: 16px 24px 0;
  overflow: hidden;
  border-radius: 24px 24px 0 0;
  background: #fff8f6;
}
.card > * {
  position: relative;
}
.card .deco {
  position: absolute;
  top: 0;
  right: 0;
}
h2 {
  margin: 0;
  font-size: 42px;
  line-height: 60px;
  color: #333;
}
.vs {
  font: italic bold 26px "Liberation Sans", sans-serif;
  fill: #fff;
}
.bar {
  display: flex;
  align-items: center;
  height: 137px;
  border-top: 2px solid #dcdcdf;
  background: #f6f8fb;
}
.index {
  display: flex;
  flex-direction: column;
  align-items: center;
  width: 300px;
  padding: 0 38px 4px 42px;
  font-size: 38px;
  line-height: 52px;
  color: #d9302c;
}
.index > svg,
.index b {
  margin-right: 28px;
}
.index b {
  font-weight: 400;
}
.index div {
  display: flex;
  justify-content: space-between;
  width: 100%;
  font-size: 35px;
  line-height: 50px;
}
.index span {
  color: #666;
}
.index em {
  font-style: normal;
}
.open {
  width: 295px;
  height: 105px;
  border: 0;
  border-radius: 53px;
  background: linear-gradient(#ff5900, #ff8f00);
  color: #fff8e8;
  font-size: 38px;
  font-weight: 700;
}
.actions {
  display: flex;
  flex: 1;
  justify-content: space-around;
  padding: 0 0 0 41px;
}
.action {
  display: flex;
  flex: 1;
  flex-direction: column;
  align-items: center;
  gap: 12px;
  color: #666;
  font-size: 35px;
  line-height: 50px;
}
.sysnav {
  display: grid;
  grid-template-columns: repeat(3, 21%);
  justify-content: center;
  justify-items: center;
  align-items: center;
  height: 119px;
  background: #fcfcfc;
}
</style>
